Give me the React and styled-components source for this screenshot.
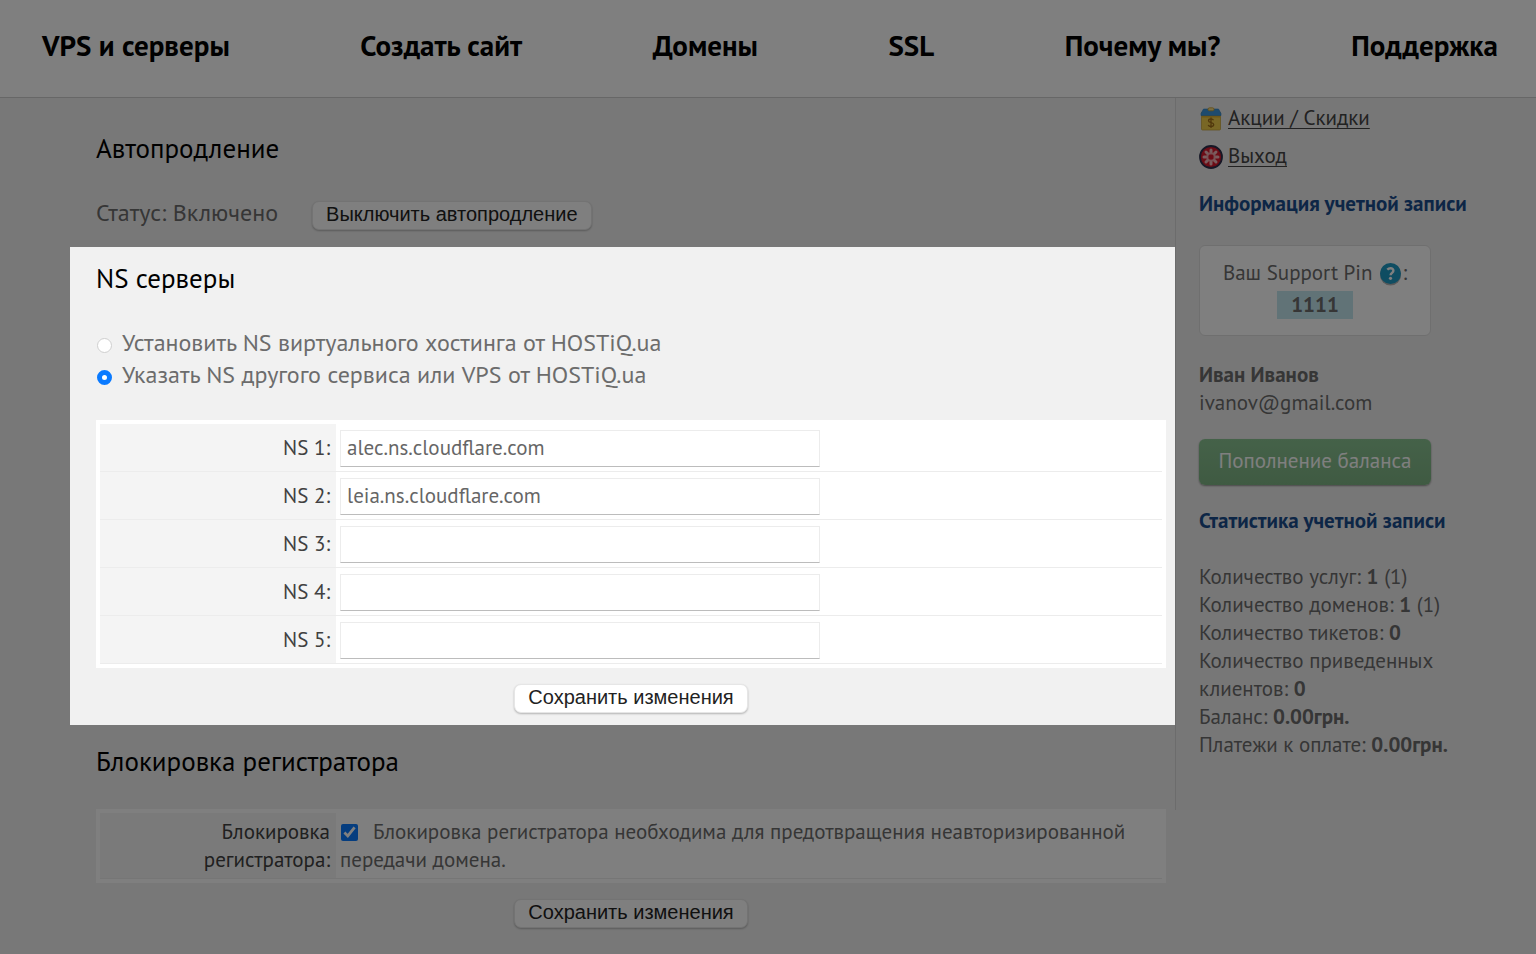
import * as React from "react"
import styled, { createGlobalStyle } from "styled-components"

const GlobalStyle = createGlobalStyle`
  *, *::before, *::after {
    box-sizing: border-box;
  }
  body {
    margin: 0;
    background: #f1f1f1;
    color: #6c6c6c;
    font-family: "PT Sans", Lato, "Noto Sans", sans-serif;
    font-size: 21px;
    line-height: 28px;
  }
`

const Page = styled.div`
  min-height: 100vh;
  overflow: hidden;
`

const Header = styled.header`
  background: #fff;
  border-bottom: 1px solid #cfcfcf;
`

const Nav = styled.nav`
  display: flex;
  justify-content: space-between;
  align-items: center;
  padding: 27px 38px 34px 42px;
`

const NavLink = styled.a`
  color: #000;
  font-size: 29px;
  font-weight: 700;
  line-height: 36px;
  text-decoration: none;
  white-space: nowrap;
`

const Columns = styled.div`
  display: grid;
  grid-template-columns: minmax(0, 1fr) 361px;
  align-items: start;
`

const Main = styled.main`
  padding-left: 70px;
`

const Section = styled.section`
  padding: ${(props) => props.$top}px 9px ${(props) => props.$bottom}px 26px;
`

// everything around the highlighted section is dimmed by its shadow
const Spotlight = styled(Section)`
  position: relative;
  z-index: 1;
  background: #f1f1f1;
  box-shadow: 0 0 0 9999px rgba(0, 0, 0, 0.5);
`

const Title = styled.h2`
  margin: 0 0 ${(props) => props.$gap}px;
  color: #000;
  font-size: 27px;
  font-weight: 400;
  line-height: 32px;
`

const StatusRow = styled.div`
  display: flex;
  align-items: flex-start;
  gap: 34px;
`

const Status = styled.span`
  font-size: 24px;
  line-height: 24px;
`

const Button = styled.button`
  height: 29px;
  padding: 0 13px 3px;
  border: 1px solid #e6e6e6;
  border-radius: 7px;
  background: #fff;
  box-shadow: 0 1px 2px rgba(0, 0, 0, 0.25);
  color: #222;
  font-family: "Liberation Sans", Arial, sans-serif;
  font-size: 20px;
  line-height: 24px;
`

const Actions = styled.div`
  display: flex;
  justify-content: center;
  padding-top: 16px;
`

const RadioLabel = styled.label`
  display: flex;
  align-items: center;
  gap: 10px;
  font-size: 24px;
  line-height: 32px;
`

const Radio = styled.input`
  appearance: none;
  width: 15px;
  height: 15px;
  margin: 4px 0 0 1px;
  border: 1px solid #cfcfcf;
  border-radius: 50%;
  background: #fff;
  &:checked {
    border: 5px solid #0a7aff;
  }
`

const Table = styled.table`
  width: 100%;
  margin-top: ${(props) => props.$top}px;
  border: 4px solid #fff;
  border-spacing: 0;
  background: #fff;
  table-layout: fixed;
`

const LabelCell = styled.th`
  width: 236px;
  padding: 5px 6px 4px;
  border-bottom: 1px solid #ececec;
  background: #f4f4f4;
  color: #404040;
  font-weight: 400;
  text-align: right;
`

const Cell = styled.td`
  padding: 5px 4px 4px;
  border-bottom: 1px solid #ececec;
  vertical-align: top;
`

const TextInput = styled.input`
  display: block;
  width: 480px;
  max-width: 100%;
  height: 37px;
  margin-top: 1px;
  padding: 0 6px 3px;
  border: 1px solid #ececec;
  border-bottom-color: #bcbcbc;
  background: #fff;
  color: #666;
  font-family: inherit;
  font-size: 21px;
`

const Checkbox = styled.input`
  width: 17px;
  height: 17px;
  margin: 0 15px 0 1px;
  vertical-align: -2px;
  accent-color: #0a7aff;
`

const Sidebar = styled.aside`
  min-height: 712px;
  padding: 1px 60px 0 23px;
  border-left: 1px solid #d9d9d9;
  background: #efefef;
`

const MenuLink = styled.a`
  display: flex;
  align-items: center;
  gap: 5px;
  height: 38px;
  color: #444;
  text-underline-offset: 3px;
  text-decoration-thickness: 1px;
  svg {
    flex: none;
    margin-top: 2px;
  }
`

const SideTitle = styled.h3`
  margin: ${(props) => props.$top}px 0 ${(props) => props.$bottom}px;
  color: #1a4d8c;
  font-size: 21px;
  font-weight: 700;
  white-space: nowrap;
`

const PinBox = styled.div`
  display: flex;
  flex-direction: column;
  align-items: center;
  gap: 4px;
  width: 232px;
  padding: 13px 0 16px;
  border: 1px solid #dedede;
  border-radius: 6px;
  background: #fff;
`

const PinLabel = styled.div`
  display: flex;
  align-items: center;
  svg {
    margin: 1px 0 0 7px;
  }
`

const Pin = styled.strong`
  padding: 0 14px;
  background: #c3e6ee;
`

const Account = styled.div`
  margin: 25px 0 22px;
`

const TopUp = styled.button`
  width: 232px;
  height: 46px;
  padding: 0 0 4px;
  border: 0;
  border-radius: 6px;
  background: linear-gradient(#8ac492, #7fb585);
  box-shadow: 0 1px 2px rgba(0, 0, 0, 0.4);
  color: #fff;
  font-family: inherit;
  font-size: 21px;
`

const Stats = styled.ul`
  margin: 0;
  padding: 0;
  list-style: none;
`

const OffersIcon = () => (
  <svg width="24" height="24" viewBox="0 0 24 24" aria-hidden="true">
    <rect x="2.5" y="5" width="19" height="18" rx="1" fill="#f2cf4a" stroke="#c9a640" strokeWidth=".8" />
    <path d="M3 8.500h18v2H3z" fill="#dcae30" />
    <path d="M4.500 2h15l2.500 4.500v2H2v-2z" fill="#3d96dc" stroke="#2d7fc4" strokeWidth=".6" />
    <rect x="9" y=".8" width="6" height="3" rx="1.500" fill="#f5dc86" stroke="#c79a25" strokeWidth=".8" />
    <path d="M14.500 13.200c-.5-1-1.400-1.300-2.500-1.300-1.500 0-2.500.7-2.500 1.800 0 2.600 5.200 1.200 5.200 3.900 0 1.200-1.100 2-2.700 2-1.300 0-2.400-.5-2.800-1.500M12 10.600v10.300" fill="none" stroke="#a06c18" strokeWidth="1.300" />
  </svg>
)

const ExitIcon = () => (
  <svg width="24" height="24" viewBox="0 0 24 24" aria-hidden="true">
    <circle cx="12" cy="12" r="11" fill="#d8182c" stroke="#2c2f4c" strokeWidth="1.800" />
    <g stroke="#f5b9bd" strokeWidth="3" strokeLinecap="round">
      <path d="M12 5v3M12 16v3M5 12h3M16 12h3M7 7l2 2M15 15l2 2M17 7l-2 2M9 15l-2 2" />
    </g>
    <circle cx="12" cy="12" r="3.800" fill="none" stroke="#f0a5ab" strokeWidth="1.600" />
  </svg>
)

const HelpIcon = () => (
  <svg width="23" height="25" viewBox="0 0 23 25" aria-hidden="true">
    <circle cx="11.500" cy="14" r="10.500" fill="#b5b5b5" />
    <circle cx="11.500" cy="12.500" r="10.500" fill="#1f9bc4" />
    <path d="M8.300 8.700c1-1 2-1.400 3.200-1.400 1.800 0 2.900.9 2.900 2.400 0 2.200-2.800 2.200-2.800 4.600" fill="none" stroke="#fff" strokeWidth="2.400" />
    <circle cx="11.500" cy="17.300" r="1.600" fill="#fff" />
  </svg>
)

const menu = ["VPS и серверы", "Создать сайт", "Домены", "SSL", "Почему мы?", "Поддержка"]

const nameServers = ["alec.ns.cloudflare.com", "leia.ns.cloudflare.com", "", "", ""]

const stats = [
  { label: "Количество услуг:", value: "1", extra: "(1)" },
  { label: "Количество доменов:", value: "1", extra: "(1)" },
  { label: "Количество тикетов:", value: "0" },
  { label: "Количество приведенных клиентов:", value: "0" },
  { label: "Баланс:", value: "0.00грн." },
  { label: "Платежи к оплате:", value: "0.00грн." },
]

const App = () => (
  <>
    <GlobalStyle />
    <Page>
      <Header>
        <Nav>
          {menu.map((item) => (
            <NavLink href="#" key={item}>{item}</NavLink>
          ))}
        </Nav>
      </Header>
      <Columns>
        <Main>
          <Section $top={34} $bottom={17}>
            <Title $gap={37}>Автопродление</Title>
            <StatusRow>
              <Status>Статус: Включено</Status>
              <Button type="button">Выключить автопродление</Button>
            </StatusRow>
          </Section>
          <Spotlight $top={15} $bottom={12}>
            <Title $gap={33}>NS серверы</Title>
            <RadioLabel>
              <Radio type="radio" name="ns" value="default" />
              Установить NS виртуального хостинга от HOSTiQ.ua
            </RadioLabel>
            <RadioLabel>
              <Radio type="radio" name="ns" value="custom" defaultChecked />
              Указать NS другого сервиса или VPS от HOSTiQ.ua
            </RadioLabel>
            <Table $top={29}>
              <tbody>
                {nameServers.map((server, i) => (
                  <tr key={i}>
                    <LabelCell scope="row">
                      <label htmlFor={`ns${i + 1}`}>NS {i + 1}:</label>
                    </LabelCell>
                    <Cell>
                      <TextInput id={`ns${i + 1}`} type="text" defaultValue={server} />
                    </Cell>
                  </tr>
                ))}
              </tbody>
            </Table>
            <Actions>
              <Button type="submit">Сохранить изменения</Button>
            </Actions>
          </Spotlight>
          <Section $top={20} $bottom={26}>
            <Title $gap={32}>Блокировка регистратора</Title>
            <Table $top={0}>
              <tbody>
                <tr>
                  <LabelCell scope="row">
                    <label htmlFor="lock">Блокировка регистратора:</label>
                  </LabelCell>
                  <Cell>
                    <Checkbox id="lock" type="checkbox" defaultChecked />
                    Блокировка регистратора необходима для предотвращения неавторизированной передачи домена.
                  </Cell>
                </tr>
              </tbody>
            </Table>
            <Actions>
              <Button type="submit">Сохранить изменения</Button>
            </Actions>
          </Section>
        </Main>
        <Sidebar>
          <MenuLink href="#"><OffersIcon />Акции / Скидки</MenuLink>
          <MenuLink href="#"><ExitIcon />Выход</MenuLink>
          <SideTitle $top={15} $bottom={27}>Информация учетной записи</SideTitle>
          <PinBox>
            <PinLabel>Ваш Support Pin <HelpIcon />:</PinLabel>
            <Pin>1111</Pin>
          </PinBox>
          <Account>
            <strong>Иван Иванов</strong>
            <div>ivanov@gmail.com</div>
          </Account>
          <TopUp type="button">Пополнение баланса</TopUp>
          <SideTitle $top={22} $bottom={28}>Статистика учетной записи</SideTitle>
          <Stats>
            {stats.map(({ label, value, extra }) => (
              <li key={label}>
                {label} <strong>{value}</strong> {extra}
              </li>
            ))}
          </Stats>
        </Sidebar>
      </Columns>
    </Page>
  </>
)

export default App
